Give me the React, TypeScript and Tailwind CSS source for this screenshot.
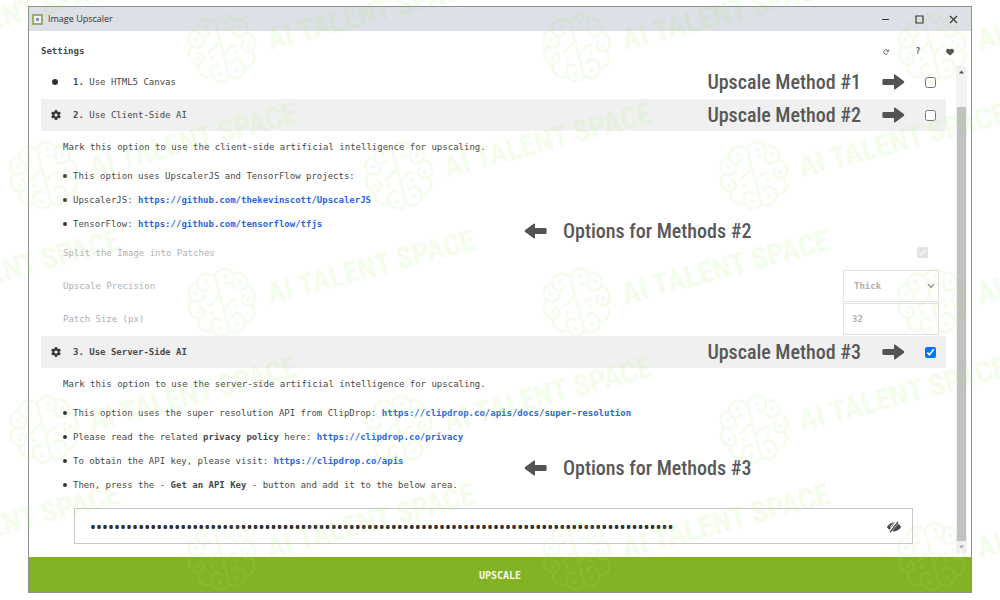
import React from 'react'
import { FaGear, FaHeart, FaArrowRotateRight } from 'react-icons/fa6'

const MONO = "font-['DejaVu_Sans_Mono','Liberation_Mono',monospace]"

const ArrowIcon: React.FC<{ flip?: boolean }> = ({ flip }) => (
  <svg className="h-4 w-[23px] shrink-0 text-[#535353]" viewBox="0 0 23 16" fill="currentColor" aria-hidden="true">
    <path
      transform={flip ? 'rotate(180 11.5 8)' : undefined}
      d="M1.6 5H12V1.4Q12 .1 13 .6L21.8 7Q23 8 21.8 9L13 15.4Q12 15.9 12 14.6V11H1.6Q.4 11 .4 9.8V6.2Q.4 5 1.6 5Z"
    />
  </svg>
)

type NoteProps = {
  text: string
}

const noteText = "font-['Roboto_Condensed','Roboto',sans-serif] text-[20px] leading-6 font-medium whitespace-nowrap text-[#585858]"

const OptionsNote: React.FC<NoteProps> = ({ text }) => (
  <div className="absolute top-[88px] left-[483px] flex items-center gap-4">
    <ArrowIcon flip />
    <span className={noteText}>{text}</span>
  </div>
)

type MethodRowProps = {
  id: string
  number: number
  title: string
  note: string
  shaded?: boolean
  bold?: boolean
  checked?: boolean
}

const MethodRow: React.FC<MethodRowProps> = ({ id, number, title, note, shaded, bold, checked }) => (
  <div className={`flex h-8 items-center pr-[10px] pl-[10px] ${shaded ? 'bg-[#f0f0f0]' : ''}`}>
    <span className="flex w-[22px] shrink-0">
      {shaded
        ? <FaGear className="size-[10px] text-[#3a3a3a]" />
        : <span className="ml-px size-[6px] rounded-full bg-[#333]" />
      }
    </span>
    <label htmlFor={id} className={bold ? 'font-bold' : ''}>
      <b>{number}.</b> {title}
    </label>
    <div className="ml-auto flex items-center">
      <span className={noteText}>{note}</span>
      <span className="mr-5 ml-[21px] flex"><ArrowIcon /></span>
      <input id={id} type="checkbox" defaultChecked={checked} className="size-[11px]" />
    </div>
  </div>
)

const Link: React.FC<{ href: string }> = ({ href }) => (
  <a href={href} className="font-bold text-[#2a66ea]">{href}</a>
)

const Item: React.FC<{ children: React.ReactNode }> = ({ children }) => (
  <li className="flex items-center gap-[6px]">
    <span className="size-1 rounded-full bg-[#333]" />
    <span>{children}</span>
  </li>
)

const Brain: React.FC = () => (
  <g fill="none" strokeWidth="2.6" strokeLinecap="round">
    <path d="M0-27C-5-35-17-34-19-25C-28-26-33-17-28-10C-36-5-35 6-27 9C-31 17-24 26-16 23C-14 33-4 34 0 28C5 34 15 33 17 24C26 26 32 17 28 9C36 5 35-6 28-10C33-18 27-27 18-25C16-34 5-35 0-27V28" />
    <path d="M-19-25C-20-17-12-14-8-19M-28-10C-21-5-14-9-16-14M-27 9C-20 9-17 2-23-2M-16 23C-18 14-10 11-6 16M-14 0C-6-2-4-8 0-6" />
    <path d="M18-25C20-17 12-14 8-19M28-10C21-5 14-9 16-14M28 9C20 9 17 2 23-2M17 24C18 14 10 11 6 16M14 0C6-2 4 6 0 6" />
    <circle cx="-10" cy="-25" r="1" />
    <circle cx="-23" cy="-16" r="1" />
    <circle cx="-26" cy="3" r="1" />
    <circle cx="-12" cy="7" r="1" />
    <circle cx="-9" cy="24" r="1" />
    <circle cx="10" cy="-25" r="1" />
    <circle cx="23" cy="-16" r="1" />
    <circle cx="26" cy="3" r="1" />
    <circle cx="12" cy="7" r="1" />
    <circle cx="9" cy="24" r="1" />
  </g>
)

const marks = [
  [-133, 49], [222, 49], [577, 49], [932, 49],
  [44, 176], [399, 176], [754, 176],
  [-133, 303], [222, 303], [577, 303], [932, 303],
  [44, 430], [399, 430], [754, 430],
  [-133, 557], [222, 557], [577, 557], [932, 557],
]

const Watermark: React.FC = () => (
  <svg className="pointer-events-none absolute inset-0 size-full" aria-hidden="true">
    {marks.map(([x, y]) => (
      <g key={`${x}-${y}`} transform={`translate(${x} ${y}) rotate(-15)`} stroke="#9cf060" fill="#9cf060" opacity="0.11">
        <Brain />
        <text x="46" y="14" stroke="none" className="font-['Roboto_Condensed','Roboto',sans-serif] text-[30px] font-bold">
          AI TALENT SPACE
        </text>
      </g>
    ))}
  </svg>
)

const TitleBar: React.FC = () => (
  <div className="flex h-6 shrink-0 items-center bg-[#dde0e6] pr-[13px] pl-[3px]">
    <span className="flex size-[11px] items-center justify-center border-2 border-[#9dab72] bg-[#eef0f2]">
      <span className="size-[3px] bg-[#8b91a5]" />
    </span>
    <h1 className="ml-[5px] font-['Open_Sans','Noto_Sans',sans-serif] text-[9px] text-[#333]">Image Upscaler</h1>
    <div className="ml-auto flex items-center gap-[25px] text-[#333]">
      <button aria-label="Minimize">
        <svg className="size-[9px]" viewBox="0 0 9 9" stroke="currentColor" fill="none"><path d="M1 4.5H8" /></svg>
      </button>
      <button aria-label="Maximize">
        <svg className="size-[9px]" viewBox="0 0 9 9" stroke="currentColor" fill="none" strokeWidth="1.2"><path d="M1 1H8V8H1Z" /></svg>
      </button>
      <button aria-label="Close">
        <svg className="size-[9px]" viewBox="0 0 9 9" stroke="currentColor" fill="none" strokeWidth="1.2"><path d="M1 1L8 8M8 1L1 8" /></svg>
      </button>
    </div>
  </div>
)

const Scrollbar: React.FC = () => (
  <div className="mr-1 mb-1 flex w-[11px] shrink-0 flex-col items-center bg-[#f3f3f3] py-1">
    <svg className="h-1 w-[5px] shrink-0" viewBox="0 0 5 4" fill="#505050"><path d="M0 3.5L2.5 .5L5 3.5Z" /></svg>
    <div className="mt-[33px] mb-1 w-[9px] grow bg-[#c1c1c1]" />
    <svg className="h-1 w-[5px] shrink-0" viewBox="0 0 5 4" fill="#a3a3a3"><path d="M0 .5L2.5 3.5L5 .5Z" /></svg>
  </div>
)

const App: React.FC = () => {
  return (
    <div className="relative min-h-screen overflow-hidden bg-white px-7 pt-[6px] pb-[6px]">
      <main className={`flex flex-col border border-[#8f8f8f] text-[9px] leading-6 text-[#484848] ${MONO}`}>
        <TitleBar />
        <header className="flex h-[35px] items-center justify-between pt-1 pr-[17px] pl-3">
          <h2 className="font-bold">Settings</h2>
          <div className="flex items-center gap-6 pt-[2px] text-[#555]">
            <button aria-label="Reload" className="flex w-2 justify-center"><FaArrowRotateRight className="size-[6px]" /></button>
            <button aria-label="Help" className="w-2 text-[8px] leading-none font-bold">?</button>
            <button aria-label="Favorite" className="flex w-2 justify-center"><FaHeart className="size-2" /></button>
          </div>
        </header>
        <div className="flex">
          <div className="mr-[10px] ml-3 grow pb-[13px]">
            <div className="pb-px">
              <MethodRow id="canvas" number={1} title="Use HTML5 Canvas" note="Upscale Method #1" />
            </div>
            <MethodRow id="client" number={2} title="Use Client-Side AI" note="Upscale Method #2" shaded />
            <section className="relative pt-1 pr-[7px] pb-px pl-[22px]">
              <OptionsNote text="Options for Methods #2" />
              <p>Mark this option to use the client-side artificial intelligence for upscaling.</p>
              <ul className="mt-[5px]">
                <Item>This option uses UpscalerJS and TensorFlow projects:</Item>
                <Item>UpscalerJS: <Link href="https://github.com/thekevinscott/UpscalerJS" /></Item>
                <Item>TensorFlow: <Link href="https://github.com/tensorflow/tfjs" /></Item>
              </ul>
              <div className="text-[#b0b0b0]">
                <div className="flex h-[33px] items-center justify-between pr-[11px]">
                  <label htmlFor="split">Split the Image into Patches</label>
                  <input id="split" type="checkbox" defaultChecked disabled className="size-[11px] opacity-60" />
                </div>
                <div className="flex h-[33px] items-center justify-between">
                  <label htmlFor="precision">Upscale Precision</label>
                  <div className="relative flex">
                    <select id="precision" disabled className="h-8 w-24 appearance-none border border-[#e2e2e2] pl-[10px] font-bold">
                      <option>Thick</option>
                    </select>
                    <svg className="absolute top-[13px] right-1 h-[6px] w-2" viewBox="0 0 8 6" fill="none" stroke="#999" strokeWidth="1.5"><path d="M1 1L4 4.4L7 1" /></svg>
                  </div>
                </div>
                <div className="flex h-[33px] items-center justify-between">
                  <label htmlFor="patch">Patch Size (px)</label>
                  <input id="patch" type="text" defaultValue="32" disabled className="h-8 w-24 border border-[#e2e2e2] pl-2 font-bold" />
                </div>
              </div>
            </section>
            <MethodRow id="server" number={3} title="Use Server-Side AI" note="Upscale Method #3" shaded bold checked />
            <section className="relative pt-1 pl-[22px]">
              <OptionsNote text="Options for Methods #3" />
              <p>Mark this option to use the server-side artificial intelligence for upscaling.</p>
              <ul className="mt-[5px]">
                <Item>This option uses the super resolution API from ClipDrop: <Link href="https://clipdrop.co/apis/docs/super-resolution" /></Item>
                <Item>Please read the related <b>privacy policy</b> here: <Link href="https://clipdrop.co/privacy" /></Item>
                <Item>To obtain the API key, please visit: <Link href="https://clipdrop.co/apis" /></Item>
                <Item>Then, press the - <b>Get an API Key</b> - button and add it to the below area.</Item>
              </ul>
              <div className="mt-[11px] mr-[33px] ml-[11px] flex h-9 items-center border border-[#c8c8c8] pt-[2px] pr-[10px] pl-[15px]">
                <input type="password" aria-label="API Key" defaultValue={'k'.repeat(97)} className="min-w-0 grow font-['Noto_Sans',sans-serif] text-[16px] text-[#2f2f2f]" />
                <button aria-label="Show API Key">
                  <svg className="h-3 w-4" viewBox="0 0 16 12" fill="none" aria-hidden="true">
                    <path d="M.8 6Q4 1.6 8 1.6T15.2 6Q12 10.4 8 10.4T.8 6Z" fill="#4a4a4a" />
                    <path d="M8 2.8A3.2 3.2 0 0 0 5 6.8" stroke="#fff" />
                    <path d="M3 12L11.8 .4" stroke="#fff" strokeWidth="3" />
                    <path d="M4 11.4L12 .8" stroke="#4a4a4a" strokeWidth="1.4" />
                  </svg>
                </button>
              </div>
            </section>
          </div>
          <Scrollbar />
        </div>
        <button className="h-[35px] bg-[#84b226] pt-[3px] text-[10px] font-bold text-[#f4f9e8]">UPSCALE</button>
      </main>
      <Watermark />
    </div>
  )
}

export default App
